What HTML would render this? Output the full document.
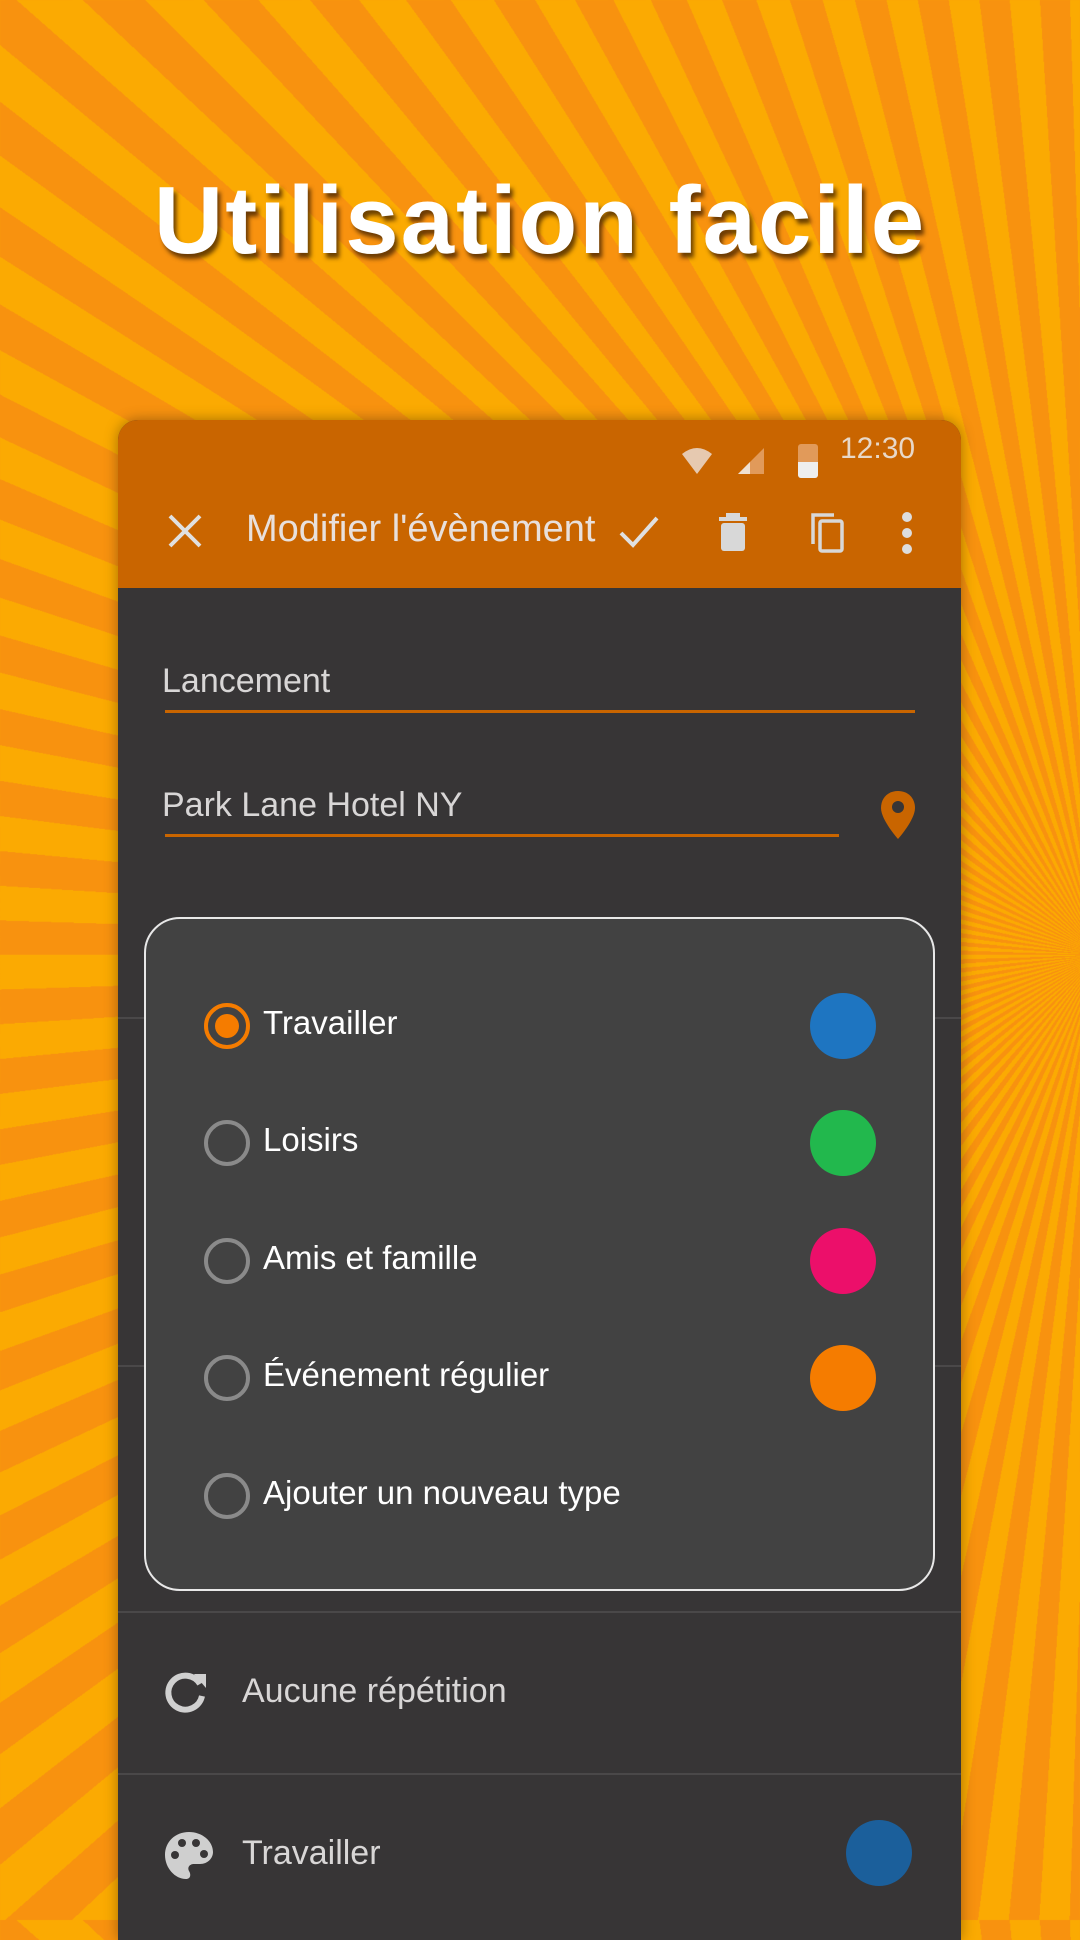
<!DOCTYPE html>
<html><head><meta charset="utf-8"><style>
*{margin:0;padding:0;box-sizing:border-box}
body{width:1080px;height:1920px;overflow:hidden;position:relative;font-family:"Liberation Sans",sans-serif;
background:repeating-conic-gradient(from 0deg at 1100px 955px,#f8920f 0deg 1.8deg,#fbaa02 1.8deg 3.6deg);}
.title{position:absolute;top:166px;left:0;width:1080px;text-align:center;color:#fff;font-weight:bold;font-size:96px;letter-spacing:2px;text-shadow:3px 5px 4px rgba(60,30,0,.75)}
.phone{position:absolute;left:118px;top:420px;width:843px;height:1520px;background:#373536;border-radius:20px 20px 0 0;overflow:hidden;box-shadow:0 0 14px rgba(0,0,0,.35)}
.bar{position:absolute;left:0;top:0;width:100%;height:168px;background:#c96500}
.abs{position:absolute}
.t{color:#d8d6d6;font-size:34px;position:absolute;white-space:nowrap}
.line{position:absolute;height:3px;background:#c96500}
.div{position:absolute;left:0;width:100%;height:2px;background:#4a4849}
.dlg{position:absolute;left:144px;top:917px;width:791px;height:674px;background:#424242;border:2px solid #e8e8e8;border-radius:36px}
.row{position:absolute;left:0;width:100%;height:60px}
.rad{position:absolute;left:58px;width:46px;height:46px;border:4px solid #8a8a8a;border-radius:50%}
.row span{position:absolute;left:117px;color:#fff;font-size:33px}
.dot{position:absolute;left:664px;width:66px;height:66px;border-radius:50%}
</style></head><body>
<div class="title">Utilisation facile</div>
<div class="phone">
 <div class="bar">
  <svg class="abs" style="left:562px;top:26px" width="34" height="30" viewBox="0 0 34 30"><path d="M2 8 Q17 -4 32 8 L17 28 Z" fill="#e6c9b0"/></svg>
  <svg class="abs" style="left:618px;top:26px" width="30" height="30" viewBox="0 0 30 30"><path d="M28 2 V28 H2 Z" fill="#e19a5a"/><path d="M14 16 V28 H2 Z" fill="#f0e0d0"/></svg>
  <div class="abs" style="left:680px;top:24px;width:20px;height:34px;border-radius:3px;background:#e19a5a"></div>
  <div class="abs" style="left:680px;top:42px;width:20px;height:16px;border-radius:0 0 3px 3px;background:#eee"></div>
  <div class="t" style="left:722px;top:12px;font-size:30px;color:#e8d8c8">12:30</div>
  <svg class="abs" style="left:48px;top:92px" width="38" height="38" viewBox="0 0 38 38"><path d="M4 4 L34 34 M34 4 L4 34" stroke="#e0e0e0" stroke-width="4"/></svg>
  <div class="t" style="left:128px;top:88px;font-size:38px;color:#e8e0dc">Modifier l'évènement</div>
  <svg class="abs" style="left:500px;top:94px" width="42" height="36" viewBox="0 0 42 36"><path d="M3 19 L15 31 L39 4" stroke="#e0e0e0" stroke-width="4" fill="none"/></svg>
  <svg class="abs" style="left:600px;top:92px" width="30" height="40" viewBox="0 0 30 40"><rect x="8" y="1" width="14" height="4" fill="#d8d8d8"/><rect x="1" y="5" width="28" height="4" fill="#d8d8d8"/><rect x="3" y="11" width="24" height="28" rx="3" fill="#d8d8d8"/></svg>
  <svg class="abs" style="left:692px;top:92px" width="36" height="42" viewBox="0 0 36 42"><path d="M3 32 V3 H24" stroke="#d8d8d8" stroke-width="3.5" fill="none"/><rect x="10" y="9" width="22" height="30" rx="2" stroke="#d8d8d8" stroke-width="3.5" fill="none"/></svg>
  <svg class="abs" style="left:782px;top:92px" width="14" height="42" viewBox="0 0 14 42"><circle cx="7" cy="5" r="5" fill="#ddd"/><circle cx="7" cy="21" r="5" fill="#ddd"/><circle cx="7" cy="37" r="5" fill="#ddd"/></svg>
 </div>
 <div class="t" style="left:44px;top:242px">Lancement</div>
 <div class="line" style="left:47px;top:290px;width:750px"></div>
 <div class="t" style="left:44px;top:366px">Park Lane Hotel NY</div>
 <div class="line" style="left:47px;top:414px;width:674px"></div>
 <svg class="abs" style="left:762px;top:370px" width="36" height="50" viewBox="0 0 36 50"><path d="M18 1 C8 1 1 8 1 18 C1 30 18 49 18 49 C18 49 35 30 35 18 C35 8 28 1 18 1 Z" fill="#c96500"/><circle cx="18" cy="17" r="6" fill="#373536"/></svg>
 <div class="div" style="top:597px"></div>
 <div class="div" style="top:945px"></div>
 <div class="div" style="top:1191px"></div>
 <div class="div" style="top:1353px"></div>
 <svg class="abs" style="left:46px;top:1250px" width="44" height="44" viewBox="0 0 44 44"><path d="M36 14 A17 17 0 1 0 38 26" stroke="#d0d0d0" stroke-width="6" fill="none"/><path d="M30 4 L42 4 L42 18 Z" fill="#d0d0d0"/></svg>
 <div class="t" style="left:124px;top:1252px">Aucune répétition</div>
 <svg class="abs" style="left:46px;top:1410px" width="50" height="52" viewBox="0 0 50 52"><path d="M25 2 C11 2 1 12 1 25 C1 38 11 49 22 49 C27 49 27 44 25 41 C23 37 26 34 30 34 L36 34 C44 34 49 28 49 22 C49 11 38 2 25 2 Z" fill="#cfcfcf"/><circle cx="11" cy="25" r="4" fill="#373536"/><circle cx="18" cy="13" r="4" fill="#373536"/><circle cx="32" cy="13" r="4" fill="#373536"/><circle cx="40" cy="24" r="4" fill="#373536"/></svg>
 <div class="t" style="left:124px;top:1414px">Travailler</div>
 <div class="abs" style="left:728px;top:1400px;width:66px;height:66px;border-radius:50%;background:#1b5f9b"></div>
</div>
<div class="dlg">
 <div class="row" style="top:77px"><div class="rad" style="top:7px;border-color:#f57c00"><div style="position:absolute;left:7px;top:7px;width:24px;height:24px;border-radius:50%;background:#f57c00"></div></div><span style="top:8px">Travailler</span><div class="dot" style="top:-3px;background:#1e75c1"></div></div>
 <div class="row" style="top:194px"><div class="rad" style="top:7px"></div><span style="top:8px">Loisirs</span><div class="dot" style="top:-3px;background:#22b84d"></div></div>
 <div class="row" style="top:312px"><div class="rad" style="top:7px"></div><span style="top:8px">Amis et famille</span><div class="dot" style="top:-3px;background:#ec0f6a"></div></div>
 <div class="row" style="top:429px"><div class="rad" style="top:7px"></div><span style="top:8px">Événement régulier</span><div class="dot" style="top:-3px;background:#f57c00"></div></div>
 <div class="row" style="top:547px"><div class="rad" style="top:7px"></div><span style="top:8px">Ajouter un nouveau type</span></div>
</div>
</body></html>
